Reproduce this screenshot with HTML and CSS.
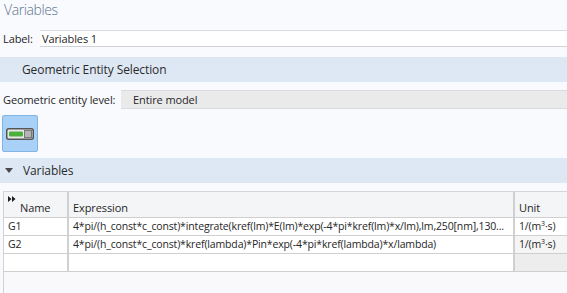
FILE: index.html
```html
<!DOCTYPE html>
<html lang="en">
    <head>
        <meta charset="UTF-8" />
        <title>Variables</title>
        <link rel="stylesheet" href="styles.css">
    </head>
    <body>
        <div class="title">Variables</div>
        <div class="field label-field">
            <span class="field-label">Label:</span>
            <div class="text-input">Variables 1</div>
        </div>
        <div class="section">Geometric Entity Selection</div>
        <div class="field level-field">
            <span class="field-label">Geometric entity level:</span>
            <div class="combo">Entire model</div>
        </div>
        <button class="toggle-button">
            <svg width="28" height="12" viewBox="0 0 28 12">
                <rect x="0.75" y="0.75" width="26.5" height="10.5" rx="2" fill="#e8e8e8" stroke="#555" stroke-width="1.5" />
                <rect x="3" y="3.5" width="14" height="5" rx="1" fill="#4caf3c" />
                <rect x="18.5" y="2.5" width="7" height="7" fill="#b4b4b4" stroke="#777" stroke-width="1" />
            </svg>
        </button>
        <div class="section section-open">
            <span class="caret"></span>
            Variables
        </div>
        <div class="table-wrap">
            <table class="var-table">
                <thead>
                    <tr>
                        <th class="col-name">
                            <svg class="ff" width="8" height="6" viewBox="0 0 8 6">
                                <path d="M0 0 L3.5 3 L0 6 Z M4 0 L7.5 3 L4 6 Z" fill="#1e1e1e" />
                            </svg>
                            Name
                        </th>
                        <th class="col-expr">Expression</th>
                        <th class="col-unit">Unit</th>
                    </tr>
                </thead>
                <tbody>
                    <tr>
                        <td>G1</td>
                        <td>4*pi/(h_const*c_const)*integrate(kref(lm)*E(lm)*exp(-4*pi*kref(lm)*x/lm),lm,250[nm],130...</td>
                        <td class="unit-light">1/(m<sup>3</sup>·s)</td>
                    </tr>
                    <tr>
                        <td>G2</td>
                        <td>4*pi/(h_const*c_const)*kref(lambda)*Pin*exp(-4*pi*kref(lambda)*x/lambda)</td>
                        <td class="unit-grey">1/(m<sup>3</sup>·s)</td>
                    </tr>
                    <tr>
                        <td></td>
                        <td></td>
                        <td class="unit-dark"></td>
                    </tr>
                </tbody>
            </table>
        </div>
    </body>
</html>
```

FILE: styles.css
```css
* {
    box-sizing: border-box;
}
body {
    margin: 0;
    background-color: #f8fafd;
    color: #262626;
    font-family: "Open Sans", "Noto Sans", sans-serif;
    font-size: 11px;
    letter-spacing: -0.1px;
    overflow: hidden;
}
.title {
    height: 30px;
    padding: 0 4px;
    color: #5d7290;
    font-size: 14px;
    font-weight: 300;
    letter-spacing: -0.4px;
    line-height: 20px;
}
.field {
    display: flex;
    align-items: center;
}
.field-label {
    padding-left: 3px;
    white-space: nowrap;
}
.label-field .field-label {
    width: 40px;
}
.text-input {
    flex: 1;
    height: 17px;
    padding-left: 2px;
    background-color: #fff;
    border-top: 1px solid #d9dce0;
    border-bottom: 1px solid #cfd2d6;
    line-height: 15px;
}
.section {
    display: flex;
    align-items: center;
    height: 25px;
    margin-top: 10px;
    padding-left: 22px;
    background-color: #dee8f4;
    font-size: 12px;
    color: #2b2b2b;
}
.level-field {
    margin-top: 8px;
}
.level-field .field-label {
    width: 121px;
}
.combo {
    flex: 1;
    height: 19px;
    padding-left: 12px;
    background-color: #ebeaeb;
    border-top: 1px solid #dadbdf;
    border-bottom: 1px solid #dadbdf;
    line-height: 17px;
}
.toggle-button {
    display: flex;
    align-items: center;
    justify-content: center;
    width: 36px;
    height: 37px;
    margin: 6px 0 0 2px;
    padding: 0;
    background-color: #a9d1f7;
    border: 1px solid #83b4e6;
    border-radius: 2px;
}
.section-open {
    margin-top: 6px;
    padding-left: 5px;
}
.caret {
    width: 0;
    height: 0;
    margin-right: 10px;
    border-left: 4px solid transparent;
    border-right: 4px solid transparent;
    border-top: 5px solid #4a4a4a;
}
.table-wrap {
    height: 110px;
    margin: 8px 0 0 3px;
    background-color: #f9f9fb;
    border-left: 1px solid #d2d2d2;
    border-top: 1px solid #d6d6d6;
}
.var-table {
    width: 600px;
    border-collapse: collapse;
    table-layout: fixed;
}
.var-table th,
.var-table td {
    padding: 0 0 0 4px;
    text-align: left;
    font-weight: normal;
    white-space: nowrap;
    overflow: hidden;
    border-right: 2px solid #d0d0d0;
    border-bottom: 1px solid #cfcfcf;
}
.var-table th {
    height: 25px;
    vertical-align: bottom;
    padding-bottom: 2px;
    background-color: #f4f5f7;
    position: relative;
}
.var-table td {
    height: 18px;
    background-color: #fff;
    font-size: 10.5px;
    letter-spacing: -0.15px;
    line-height: 16px;
}
.col-name {
    width: 64px;
    padding-left: 16px !important;
}
.col-expr {
    width: 446px;
}
.ff {
    position: absolute;
    left: 4px;
    top: 4px;
}
.var-table sup {
    font-size: 7px;
    vertical-align: 4px;
    line-height: 0;
}
.unit-light {
    background-color: #fff !important;
}
.unit-grey {
    background-color: #f5f5f5 !important;
}
.unit-dark {
    background-color: #ededed !important;
}
```
